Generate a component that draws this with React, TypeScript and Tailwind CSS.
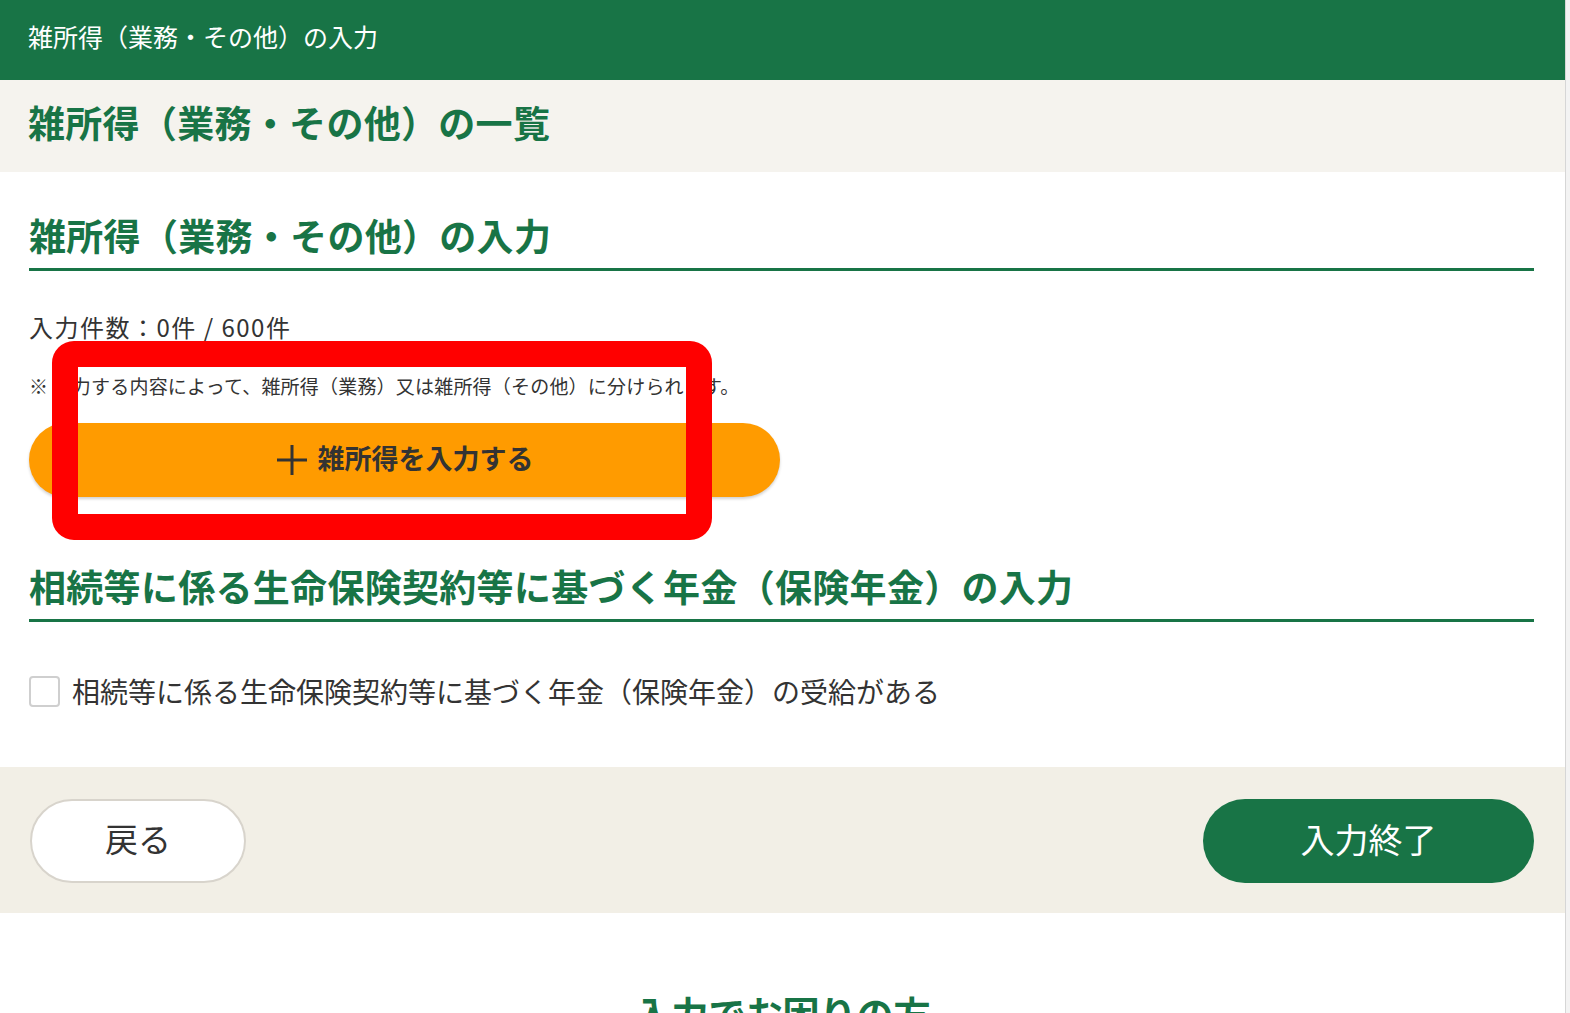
import React from "react";

const font = {
  fontFamily: '"Noto Sans CJK JP", "Noto Sans", sans-serif',
};

const SectionHeading: React.FC<{ children: React.ReactNode; className?: string }> = ({
  children,
  className,
}) => (
  <div className={`border-b-[3px] border-[#187446] pb-[14px] ${className ?? ""}`}>
    <h2 className="text-[37px] font-bold leading-none tracking-[0.3px] text-[#187446]">{children}</h2>
  </div>
);

const App: React.FC = () => {
  return (
    <div className="flex min-h-[1013px] w-full bg-white" style={font}>
      <div className="relative w-[1565px] overflow-hidden">
        {/* top bar */}
        <div className="flex h-[80px] items-center bg-[#187446] px-[28px] pb-[7px]">
          <span className="text-[25px] leading-none text-white">雑所得（業務・その他）の入力</span>
        </div>

        {/* page title */}
        <div className="flex h-[92px] items-center bg-[#f5f3ee] px-[28px] pb-[8px]">
          <h1 className="text-[37px] font-bold leading-none tracking-[0.3px] text-[#187446]">
            雑所得（業務・その他）の一覧
          </h1>
        </div>

        <div className="pl-[29px] pr-[31px]">
          <SectionHeading className="pt-[45px]">雑所得（業務・その他）の入力</SectionHeading>

          <p className="mt-[44px] text-[24px] leading-none tracking-[1.5px] text-[#333]">入力件数：0件 / 600件</p>
          <p className="mt-[37px] text-[19px] leading-none tracking-[0.2px] text-[#333]">
            ※ 入力する内容によって、雑所得（業務）又は雑所得（その他）に分けられます。
          </p>

          <button className="mt-[28px] flex h-[74px] w-[751px] items-center justify-center gap-[10px] rounded-full bg-[#ff9b00] pb-[6px] shadow-[0_2px_3px_rgba(0,0,0,0.18)]">
            <svg width="32" height="32" viewBox="0 0 32 32" className="mt-[6px] text-[#333]">
              <path d="M16 1v30M1 16h30" stroke="currentColor" strokeWidth="3" fill="none" />
            </svg>
            <span className="text-[27px] font-bold leading-none text-[#333]">雑所得を入力する</span>
          </button>

          <SectionHeading className="pt-[71px]">
            相続等に係る生命保険契約等に基づく年金（保険年金）の入力
          </SectionHeading>

          <label className="mt-[54px] flex items-center gap-[12px]">
            <span className="block h-[31px] w-[31px] rounded-[4px] border-2 border-[#cfcfcf] bg-white" />
            <span className="pb-[2px] text-[28px] leading-none text-[#333]">
              相続等に係る生命保険契約等に基づく年金（保険年金）の受給がある
            </span>
          </label>
        </div>

        {/* footer buttons */}
        <div className="mt-[60px] flex h-[146px] items-start justify-between bg-[#f2efe6] pl-[30px] pr-[31px] pt-[32px]">
          <button className="flex h-[84px] w-[216px] items-center justify-center rounded-full border-2 border-[#d8d4cc] bg-white pb-[5px]">
            <span className="text-[33px] leading-none text-[#333]">戻る</span>
          </button>
          <button className="flex h-[84px] w-[331px] items-center justify-center rounded-full bg-[#187446] pb-[5px]">
            <span className="text-[34px] leading-none text-white">入力終了</span>
          </button>
        </div>

        <div className="flex justify-center pt-[82px]">
          <h2 className="text-[37px] font-bold leading-none text-[#187446]">入力でお困りの方</h2>
        </div>

        {/* red annotation frame */}
        <div className="absolute left-[52px] top-[341px] h-[199px] w-[660px] rounded-[22px] border-[26px] border-[#ff0000]" />
      </div>
      <div className="w-[5px] border-l border-[#d6d6d6] bg-[#f3f3f3]" />
    </div>
  );
};

export default App;
